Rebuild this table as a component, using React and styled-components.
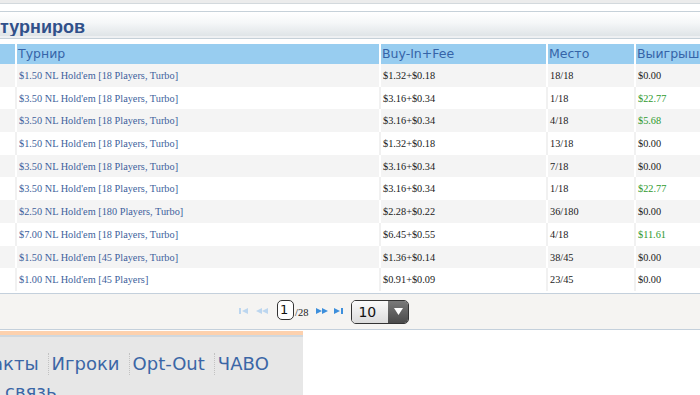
import React from "react";
import styled, { createGlobalStyle } from "styled-components";

const GlobalStyle = createGlobalStyle`
  html, body {
    margin: 0;
    padding: 0;
    background: #fff;
  }
  body {
    width: 700px;
    height: 395px;
    overflow: hidden;
    font-family: "Liberation Serif", serif;
  }
`;

const Page = styled.div`
  display: flex;
  flex-direction: column;
  width: 700px;
`;

const TopStrip = styled.div`
  height: 3px;
  background: #ececec;
  border-bottom: 1px solid #d3d9dd;
  margin-bottom: 7px;
`;

const TitleBar = styled.div`
  height: 20px;
  border-top: 1px solid #c6d1d9;
  background: linear-gradient(#ffffff, #f5f7f8 45%, #dfe4e7);
  font-family: "Liberation Sans", Arial, sans-serif;
  font-weight: bold;
  font-size: 18px;
  line-height: 22px;
  padding-top: 4px;
  color: #30508a;
  box-sizing: content-box;
  white-space: nowrap;
`;

const TitleRule = styled.div`
  height: 2px;
  background: #eef0f2;
  border-bottom: 1px solid #c5d0d8;
  margin-bottom: 5px;
`;

const Grid = styled.div`
  display: grid;
  grid-template-columns: 15px 362px 165px 86px 1fr;
  column-gap: 2px;
  background: ${(p) => p.gap};
  height: ${(p) => p.h}px;
`;

const HeadCell = styled.div`
  background: #98cdf0;
  color: #3564a8;
  font-family: "DejaVu Sans", Verdana, sans-serif;
  font-size: 12.5px;
  line-height: 20px;
  padding-left: 1px;
  white-space: nowrap;
  overflow: hidden;
`;

const Cell = styled.div`
  background: ${(p) => p.bg};
  color: ${(p) => p.color || "#1a1a1a"};
  font-size: 10.3px;
  line-height: 20.7px;
  padding: 2px 0 0 2px;
  white-space: nowrap;
  overflow: hidden;
`;

const Pager = styled.div`
  height: 35px;
  border-top: 1px solid #c4d0dc;
  border-bottom: 1px solid #c4d0dc;
  background: #f5f4f2;
  display: flex;
  align-items: center;
  padding-left: 239px;
  margin-top: 2px;
`;

const IconBtn = styled.svg`
  display: block;
  margin-right: ${(p) => p.mr}px;
`;

const PageInput = styled.div`
  width: 13px;
  height: 18px;
  border: 1.5px solid #333;
  border-radius: 5px;
  background: #fff;
  font-family: "DejaVu Sans", sans-serif;
  font-size: 13px;
  line-height: 18px;
  padding-left: 2px;
  color: #111;
  margin-top: -2px;
`;

const PageTotal = styled.span`
  font-size: 10.5px;
  color: #222;
  margin: 3px 7px 0 1px;
`;

const Select = styled.div`
  display: flex;
  width: 56px;
  height: 22px;
  border: 1px solid #333;
  border-radius: 5px;
  overflow: hidden;
  margin-left: 3px;
  margin-top: 1px;
`;

const SelectValue = styled.div`
  flex: 1;
  background: linear-gradient(#fafafa, #dcdcdc);
  font-family: "DejaVu Sans", sans-serif;
  font-size: 14px;
  line-height: 22px;
  padding-left: 6px;
  color: #111;
`;

const SelectArrow = styled.div`
  width: 20px;
  background: linear-gradient(#7a7a7a, #4a4a4a);
  display: flex;
  align-items: center;
  justify-content: center;
`;

const FooterNav = styled.div`
  width: 303px;
  height: 56px;
  margin-top: 1px;
  border-top: 4px solid #fdd1ae;
  box-shadow: inset 0 2px 0 #d0d8df;
  background: #e7e7e7;
  padding-top: 18px;
  display: flex;
  flex-wrap: wrap;
  font-family: "DejaVu Sans", Verdana, sans-serif;
  font-size: 18px;
  line-height: 22px;
  color: #3b66a6;
  overflow: hidden;
`;

const NavItem = styled.span`
  padding-right: ${(p) => (p.last ? 0 : 9)}px;
  margin-right: 3px;
  border-right: ${(p) => (p.last ? "none" : "1px dotted #c2c2c2")};
  height: 22px;
  &:first-child {
    margin-left: -8px;
  }
`;

const NavBreak = styled.span`
  flex-basis: 100%;
  padding-left: 5px;
`;

const rows = [
  ["$1.50 NL Hold'em [18 Players, Turbo]", "$1.32+$0.18", "18/18", "$0.00"],
  ["$3.50 NL Hold'em [18 Players, Turbo]", "$3.16+$0.34", "1/18", "$22.77"],
  ["$3.50 NL Hold'em [18 Players, Turbo]", "$3.16+$0.34", "4/18", "$5.68"],
  ["$1.50 NL Hold'em [18 Players, Turbo]", "$1.32+$0.18", "13/18", "$0.00"],
  ["$3.50 NL Hold'em [18 Players, Turbo]", "$3.16+$0.34", "7/18", "$0.00"],
  ["$3.50 NL Hold'em [18 Players, Turbo]", "$3.16+$0.34", "1/18", "$22.77"],
  ["$2.50 NL Hold'em [180 Players, Turbo]", "$2.28+$0.22", "36/180", "$0.00"],
  ["$7.00 NL Hold'em [18 Players, Turbo]", "$6.45+$0.55", "4/18", "$11.61"],
  ["$1.50 NL Hold'em [45 Players, Turbo]", "$1.36+$0.14", "38/45", "$0.00"],
  ["$1.00 NL Hold'em [45 Players]", "$0.91+$0.09", "23/45", "$0.00"],
];

const PagerIcon = ({ kind, color, mr }) => (
  <IconBtn width="14" height="8" viewBox="0 0 14 8" mr={mr}>
    {kind === "first" && (
      <g fill={color}>
        <rect x="0" y="1" width="2" height="6" />
        <polygon points="9,1 9,7 3,4" />
      </g>
    )}
    {kind === "prev" && (
      <g fill={color}>
        <polygon points="7,1 7,7 1,4" />
        <polygon points="13,1 13,7 7,4" />
      </g>
    )}
    {kind === "next" && (
      <g fill={color}>
        <polygon points="1,1 1,7 7,4" />
        <polygon points="7,1 7,7 13,4" />
      </g>
    )}
    {kind === "last" && (
      <g fill={color}>
        <polygon points="0,1 0,7 6,4" />
        <rect x="7" y="1" width="2" height="6" />
      </g>
    )}
  </IconBtn>
);

const App = () => {
  return (
    <Page>
      <GlobalStyle />
      <TopStrip />
      <TitleBar>турниров</TitleBar>
      <TitleRule />
      <Grid gap="#fff" h={20}>
        <HeadCell />
        <HeadCell>Турнир</HeadCell>
        <HeadCell>Buy-In+Fee</HeadCell>
        <HeadCell>Место</HeadCell>
        <HeadCell>Выигрыш</HeadCell>
      </Grid>
      {rows.map((r, i) => {
        const odd = i % 2 === 0;
        const bg = odd ? "#f4f4f4" : "#fff";
        const gap = odd ? "#fff" : "#f1f1f1";
        const won = r[3] !== "$0.00";
        return (
          <Grid key={i} gap={gap} h={22.7}>
            <Cell bg={bg} />
            <Cell bg={bg} color="#3d5f9c">
              {r[0]}
            </Cell>
            <Cell bg={bg}>{r[1]}</Cell>
            <Cell bg={bg}>{r[2]}</Cell>
            <Cell bg={bg} color={won ? "#2f9a2f" : "#1a1a1a"}>
              {r[3]}
            </Cell>
          </Grid>
        );
      })}
      <Pager>
        <PagerIcon kind="first" color="#bcd6ef" mr={2} />
        <PagerIcon kind="prev" color="#bcd6ef" mr={8} />
        <PageInput>1</PageInput>
        <PageTotal>/28</PageTotal>
        <PagerIcon kind="next" color="#3d8fdc" mr={5} />
        <PagerIcon kind="last" color="#3d8fdc" mr={0} />
        <Select>
          <SelectValue>10</SelectValue>
          <SelectArrow>
            <svg width="9" height="7" viewBox="0 0 9 7">
              <polygon points="0,0 9,0 4.5,7" fill="#fff" />
            </svg>
          </SelectArrow>
        </Select>
      </Pager>
      <FooterNav>
        <NavItem>акты</NavItem>
        <NavItem>Игроки</NavItem>
        <NavItem>Opt-Out</NavItem>
        <NavItem last>ЧАВО</NavItem>
        <NavBreak>связь</NavBreak>
      </FooterNav>
    </Page>
  );
};

export default App;
